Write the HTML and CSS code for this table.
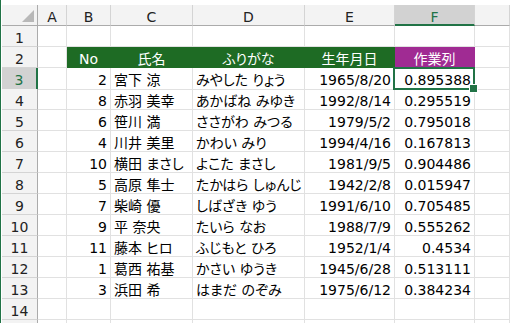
FILE: index.html
```html
<!DOCTYPE html>
<html lang="ja">
<head>
<meta charset="utf-8">
<link rel="stylesheet" href="styles.css">
</head>
<body>
<div class="sheet">
  <div class="row colhdr">
    <div class="corner"></div><div>A</div><div>B</div><div>C</div><div>D</div><div>E</div><div class="sel">F</div><div></div>
  </div>
  <div class="row">
    <div class="rh">1</div><div></div><div></div><div></div><div></div><div></div><div></div><div></div>
  </div>
  <div class="row">
    <div class="rh">2</div><div></div><div class="th">No</div><div class="th">氏名</div><div class="th">ふりがな</div><div class="th">生年月日</div><div class="th pur">作業列</div><div></div>
  </div>
  <div class="row">
    <div class="rh rsel">3</div><div></div><div class="n">2</div><div>宮下 涼</div><div>みやした りょう</div><div class="n">1965/8/20</div><div class="n active">0.895388</div><div></div>
  </div>
  <div class="row">
    <div class="rh">4</div><div></div><div class="n">8</div><div>赤羽 美幸</div><div>あかばね みゆき</div><div class="n">1992/8/14</div><div class="n">0.295519</div><div></div>
  </div>
  <div class="row">
    <div class="rh">5</div><div></div><div class="n">6</div><div>笹川 満</div><div>ささがわ みつる</div><div class="n">1979/5/2</div><div class="n">0.795018</div><div></div>
  </div>
  <div class="row">
    <div class="rh">6</div><div></div><div class="n">4</div><div>川井 美里</div><div>かわい みり</div><div class="n">1994/4/16</div><div class="n">0.167813</div><div></div>
  </div>
  <div class="row">
    <div class="rh">7</div><div></div><div class="n">10</div><div>横田 まさし</div><div>よこた まさし</div><div class="n">1981/9/5</div><div class="n">0.904486</div><div></div>
  </div>
  <div class="row">
    <div class="rh">8</div><div></div><div class="n">5</div><div>高原 隼士</div><div>たかはら しゅんじ</div><div class="n">1942/2/8</div><div class="n">0.015947</div><div></div>
  </div>
  <div class="row">
    <div class="rh">9</div><div></div><div class="n">7</div><div>柴崎 優</div><div>しばざき ゆう</div><div class="n">1991/6/10</div><div class="n">0.705485</div><div></div>
  </div>
  <div class="row">
    <div class="rh">10</div><div></div><div class="n">9</div><div>平 奈央</div><div>たいら なお</div><div class="n">1988/7/9</div><div class="n">0.555262</div><div></div>
  </div>
  <div class="row">
    <div class="rh">11</div><div></div><div class="n">11</div><div>藤本 ヒロ</div><div>ふじもと ひろ</div><div class="n">1952/1/4</div><div class="n">0.4534</div><div></div>
  </div>
  <div class="row">
    <div class="rh">12</div><div></div><div class="n">1</div><div>葛西 祐基</div><div>かさい ゆうき</div><div class="n">1945/6/28</div><div class="n">0.513111</div><div></div>
  </div>
  <div class="row">
    <div class="rh">13</div><div></div><div class="n">3</div><div>浜田 希</div><div>はまだ のぞみ</div><div class="n">1975/6/12</div><div class="n">0.384234</div><div></div>
  </div>
  <div class="row">
    <div class="rh">14</div><div></div><div></div><div></div><div></div><div></div><div></div><div></div>
  </div>
  <div class="row">
    <div class="rh"></div><div></div><div></div><div></div><div></div><div></div><div></div><div></div>
  </div>
</div>
</body>
</html>
```
FILE: styles.css
```css
* { box-sizing: border-box; }
html, body { margin: 0; height: 100%; overflow: hidden; background: #fff; }
.sheet {
  height: 100%;
  border-left: 1px solid #217346;
  padding: 5px 0 0 1px;
  font-family: "DejaVu Sans", "Noto Sans CJK JP", sans-serif;
  font-size: 14px;
  color: #000;
  font-feature-settings: "palt";
}
.row {
  display: grid;
  grid-template-columns: 36px 29px 44px 82px 112px 90px 80px 1fr;
  height: 21px;
}
.row > div {
  border-right: 1px solid #e1e1e1;
  border-bottom: 1px solid #e1e1e1;
  padding: 3px 3px 0 3px;
  line-height: 18px;
  white-space: nowrap;
  overflow: hidden;
}
.row > .n { text-align: right; }

.colhdr > div {
  background: #f3f3f3;
  text-align: center;
  border-right-color: #d4d4d4;
  border-bottom-color: #ababab;
  color: #222;
}
.colhdr > .corner { position: relative; border-right-color: #ababab; }
.colhdr > .corner::after {
  content: "";
  position: absolute;
  right: 3px;
  bottom: 3px;
  width: 0;
  height: 0;
  border-left: 12px solid transparent;
  border-bottom: 12px solid #b8b8b8;
}
.colhdr > .sel {
  background: #d2d2d2;
  color: #217346;
  border-bottom: 2px solid #217346;
}
.row > .rh {
  background: #f3f3f3;
  text-align: center;
  border-right-color: #ababab;
  border-bottom-color: #d4d4d4;
  color: #222;
}
.row > .rsel {
  background: #d2d2d2;
  color: #217346;
  border-right: 2px solid #217346;
}
.row > .th {
  background: #1e6b24;
  border-right-color: #1e6b24;
  border-bottom-color: #1e6b24;
  color: #fff;
  text-align: center;
}
.row > .pur {
  background: #a02b93;
  border-right-color: #a02b93;
  border-bottom-color: #a02b93;
}
.row > .active { position: relative; overflow: visible; }
.active::before {
  content: "";
  position: absolute;
  left: -2px;
  top: -1px;
  right: -1px;
  bottom: -1px;
  border: 2px solid #217346;
}
.active::after {
  content: "";
  position: absolute;
  right: -4px;
  bottom: -4px;
  width: 7px;
  height: 7px;
  background: #217346;
  border: 1px solid #fff;
}
```
